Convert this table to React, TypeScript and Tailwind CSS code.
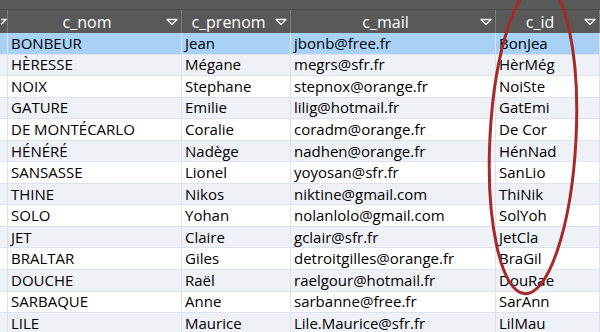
const rows = [
  ["BONBEUR", "Jean", "jbonb@free.fr", "BonJea"],
  ["HÈRESSE", "Mégane", "megrs@sfr.fr", "HèrMég"],
  ["NOIX", "Stephane", "stepnox@orange.fr", "NoiSte"],
  ["GATURE", "Emilie", "lilig@hotmail.fr", "GatEmi"],
  ["DE MONTÉCARLO", "Coralie", "coradm@orange.fr", "De Cor"],
  ["HÉNÉRÉ", "Nadège", "nadhen@orange.fr", "HénNad"],
  ["SANSASSE", "Lionel", "yoyosan@sfr.fr", "SanLio"],
  ["THINE", "Nikos", "niktine@gmail.com", "ThiNik"],
  ["SOLO", "Yohan", "nolanlolo@gmail.com", "SolYoh"],
  ["JET", "Claire", "gclair@sfr.fr", "JetCla"],
  ["BRALTAR", "Giles", "detroitgilles@orange.fr", "BraGil"],
  ["DOUCHE", "Raël", "raelgour@hotmail.fr", "DouRae"],
  ["SARBAQUE", "Anne", "sarbanne@free.fr", "SarAnn"],
  ["LILE", "Maurice", "Lile.Maurice@sfr.fr", "LilMau"],
];

const cols = "grid grid-cols-[8px_174px_109px_205px_104px]";

function FilterArrow() {
  return (
    <svg width="12" height="8" viewBox="0 0 12 8" className="shrink-0">
      <path d="M1 1.5 L11 1.5 L6 6.5 Z" fill="#595959" stroke="#f2f2f2" strokeWidth="1.3" strokeLinejoin="round" />
    </svg>
  );
}

function HeaderCell({ label }: { label: string }) {
  return (
    <div className="flex items-center border-r border-[#7a7a7a] pr-[3px]">
      <span className="flex-1 text-center">{label}</span>
      <FilterArrow />
    </div>
  );
}

export default function App() {
  return (
    <div
      className="relative w-[600px] h-[332px] overflow-hidden bg-white text-[15px] text-black"
      style={{ fontFamily: '"Open Sans", "Noto Sans", sans-serif' }}
    >
      <div className="h-[10px] bg-[#575a57] border-b border-[#4a4d4a]" />
      <div className={`${cols} h-[23px] bg-[#595959] text-white text-[16px]`}>
        <div className="flex items-center justify-end border-r border-[#7a7a7a]">
          <svg width="6" height="8" viewBox="0 0 6 8">
            <path d="M-5 1.5 L5 1.5 L0 6.5 Z" fill="#595959" stroke="#f2f2f2" strokeWidth="1.3" />
          </svg>
        </div>
        <HeaderCell label="c_nom" />
        <HeaderCell label="c_prenom" />
        <HeaderCell label="c_mail" />
        <HeaderCell label="c_id" />
      </div>
      {rows.map((r, i) => (
        <div
          key={i}
          className={`${cols} h-[21.55px] border-b border-[#dde3ee] leading-none ${
            i === 0 ? "bg-[#a9d0f5]" : i % 2 === 1 ? "bg-[#eef1f6]" : "bg-white"
          }`}
        >
          <div className="border-r border-[#dde3ee]" />
          {r.map((c, j) => (
            <div key={j} className="flex items-center pl-[3px] border-r border-[#dde3ee] whitespace-nowrap overflow-hidden">
              {c}
            </div>
          ))}
        </div>
      ))}
      <svg className="absolute left-0 top-0 pointer-events-none" width="600" height="332">
        <ellipse
          cx="533"
          cy="138"
          rx="43"
          ry="156"
          transform="rotate(3 533 138)"
          fill="none"
          stroke="#a52a2a"
          strokeWidth="3"
        />
      </svg>
    </div>
  );
}
